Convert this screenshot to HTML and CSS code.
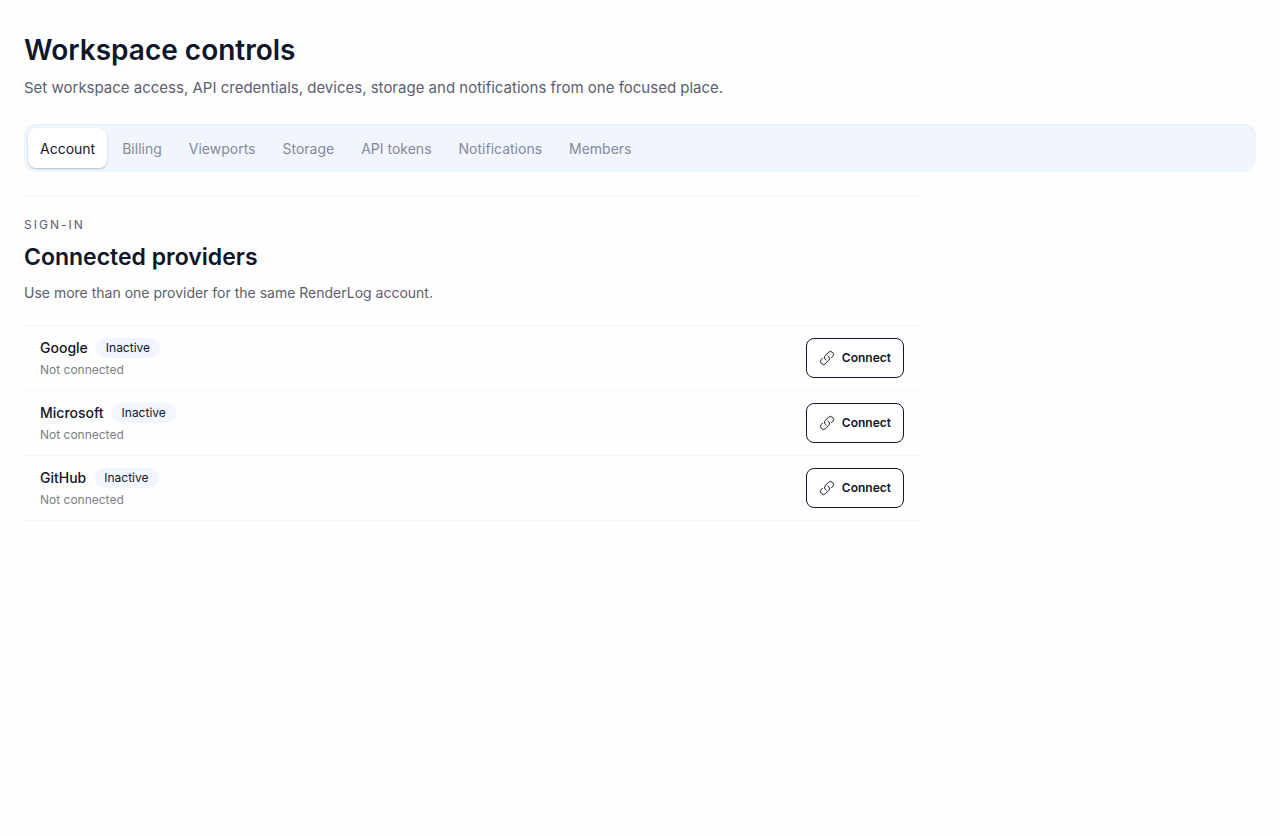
FILE: index.html
```html
<!DOCTYPE html>
<html lang="en">
<head>
    <meta charset="UTF-8">
    <meta name="viewport" content="width=device-width, initial-scale=1.0">
    <title>Workspace controls</title>
    <link rel="stylesheet" href="styles.css">
</head>
<body>
    <!-- link icon, shared by the connect buttons -->
    <svg class="icon-defs" aria-hidden="true">
        <symbol id="icon-link" viewBox="0 0 24 24">
            <path d="M13.19 8.688a4.5 4.5 0 0 1 1.242 7.244l-4.5 4.5a4.5 4.5 0 0 1-6.364-6.364l1.757-1.757m13.35-.622 1.757-1.757a4.5 4.5 0 0 0-6.364-6.364l-4.5 4.5a4.5 4.5 0 0 0 1.242 7.244"/>
        </symbol>
    </svg>
    <main class="page">
        <header class="page-header">
            <h1>Workspace controls</h1>
            <p>Set workspace access, API credentials, devices, storage and notifications from one focused place.</p>
        </header>
        <nav class="tabs" aria-label="Settings">
            <a class="tab active" href="#account" aria-current="page">Account</a>
            <a class="tab" href="#billing">Billing</a>
            <a class="tab" href="#viewports">Viewports</a>
            <a class="tab" href="#storage">Storage</a>
            <a class="tab" href="#tokens">API tokens</a>
            <a class="tab" href="#notifications">Notifications</a>
            <a class="tab" href="#members">Members</a>
        </nav>
        <section class="section" id="account">
            <div class="section-header">
                <p class="eyebrow">Sign-in</p>
                <h2>Connected providers</h2>
                <p class="section-text">Use more than one provider for the same RenderLog account.</p>
            </div>
            <ul class="providers">
                <li class="provider">
                    <div class="provider-info">
                        <div class="provider-title">
                            <h3>Google</h3>
                            <span class="badge">Inactive</span>
                        </div>
                        <p class="provider-status">Not connected</p>
                    </div>
                    <button class="connect" type="button"><svg class="icon" aria-hidden="true"><use href="#icon-link"/></svg>Connect</button>
                </li>
                <li class="provider">
                    <div class="provider-info">
                        <div class="provider-title">
                            <h3>Microsoft</h3>
                            <span class="badge">Inactive</span>
                        </div>
                        <p class="provider-status">Not connected</p>
                    </div>
                    <button class="connect" type="button"><svg class="icon" aria-hidden="true"><use href="#icon-link"/></svg>Connect</button>
                </li>
                <li class="provider">
                    <div class="provider-info">
                        <div class="provider-title">
                            <h3>GitHub</h3>
                            <span class="badge">Inactive</span>
                        </div>
                        <p class="provider-status">Not connected</p>
                    </div>
                    <button class="connect" type="button"><svg class="icon" aria-hidden="true"><use href="#icon-link"/></svg>Connect</button>
                </li>
            </ul>
        </section>
    </main>
</body>
</html>
```

FILE: styles.css
```css
* {
    box-sizing: border-box;
    margin: 0;
    padding: 0;
}
body {
    font-family: Inter, "Liberation Sans", sans-serif;
    font-size: 14px;
    line-height: 20px;
    color: #10172a;
    background-color: #fefefe;
}
.icon-defs {
    display: none;
}
.page {
    display: flex;
    flex-direction: column;
    gap: 24px;
    padding: 32px 24px;
}
.page-header {
    display: flex;
    flex-direction: column;
    gap: 8px;
}
h1 {
    font-size: 28px;
    line-height: 36px;
    font-weight: 600;
}
.page-header p {
    font-size: 15px;
    line-height: 24px;
    color: #5b6070;
}

/* tabs */
.tabs {
    display: flex;
    flex-wrap: wrap;
    gap: 3px;
    padding: 4px;
    border-radius: 12px;
    background-color: #f1f5ff;
    box-shadow: inset 0 1px 1px #e6ebf6;
}
.tab {
    padding: 11px 12px 9px;
    border-radius: 8px;
    color: #858a98;
    text-decoration: none;
}
.tab.active {
    color: #10172a;
    background-color: #fff;
    box-shadow: 0 1px 2px rgba(16, 23, 42, 0.25);
}

/* sign-in section */
.section {
    max-width: 896px;
    border-top: 1px solid #f1f5ff;
}
.section-header {
    display: flex;
    flex-direction: column;
    gap: 8px;
    padding: 20px 0;
}
.eyebrow {
    font-size: 12px;
    line-height: 16px;
    letter-spacing: 2px;
    text-transform: uppercase;
    color: #5b6070;
}
h2 {
    font-size: 23px;
    line-height: 32px;
    font-weight: 600;
}
.section-text {
    line-height: 24px;
    color: #5b6070;
}
.providers {
    list-style: none;
    border-top: 1px solid #f1f5ff;
}
.provider {
    display: flex;
    align-items: center;
    justify-content: space-between;
    padding: 12px 16px;
    border-bottom: 1px solid #f1f5ff;
}
.provider-info {
    display: flex;
    flex-direction: column;
    gap: 4px;
}
.provider-title {
    display: flex;
    align-items: center;
    gap: 8px;
}
h3 {
    font-size: 14px;
    font-weight: 500;
}
.badge {
    padding: 2px 10px;
    border-radius: 10px;
    font-size: 12px;
    line-height: 16px;
    background-color: #f1f5ff;
}
.provider-status {
    font-size: 12px;
    line-height: 16px;
    color: #7c7f88;
}
.connect {
    display: flex;
    align-items: center;
    gap: 7px;
    height: 40px;
    padding: 0 12px;
    border: 1px solid #10172a;
    border-radius: 8px;
    font-family: inherit;
    font-size: 12px;
    line-height: 16px;
    font-weight: 600;
    color: #10172a;
    background-color: #fff;
    cursor: pointer;
}
.icon {
    width: 16px;
    height: 16px;
    fill: none;
    stroke: currentColor;
    stroke-width: 1.5;
    stroke-linecap: round;
    stroke-linejoin: round;
}
```
